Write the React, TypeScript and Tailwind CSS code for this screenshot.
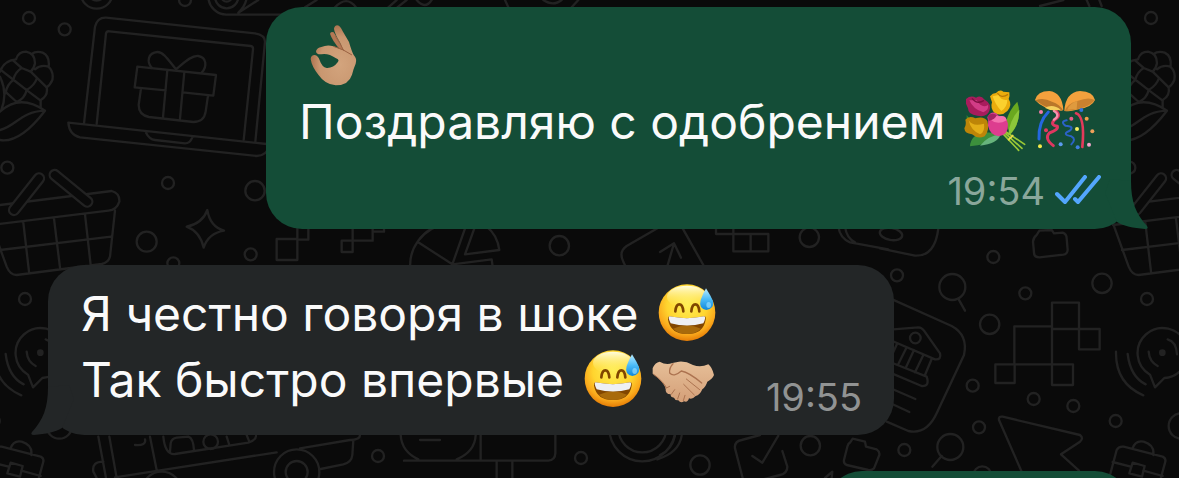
import type { ReactNode } from "react";

type EmojiProps = {
  label: string;
  children: ReactNode;
};

function Emoji({ label, children }: EmojiProps) {
  return (
    <svg role="img" aria-label={label} viewBox="0 0 204 198" className="h-[66px] w-[70px] shrink-0">
      {children}
    </svg>
  );
}

function OkHand() {
  return (
    <Emoji label="OK hand">
      <defs>
        <radialGradient id="okSkin" cx="0.65" cy="0.65" r="0.65">
          <stop offset="0" stopColor="#d3a47d" />
          <stop offset="0.7" stopColor="#c99770" />
          <stop offset="1" stopColor="#ad7450" />
        </radialGradient>
      </defs>
      <path d="M90 32Q92 24 101 28L132 78L122 82Q96 52 90 32Z" fill="#b37854" />
      <path
        d="M102 16Q106 3 117 8Q124 14 129 26L147 57Q155 85 161 96Q172 107 167 122Q160 138 156 155Q146 187 107 187Q75 184 55 155Q35 130 32 108Q33 96 44 96Q55 98 59 112Q66 133 80 135Q100 136 113 118Q120 110 108 106Q85 90 64 94Q48 95 48 84Q52 74 64 72Q82 64 100 70L130 82Q124 62 112 44Q102 26 102 16Z"
        fill="url(#okSkin)"
      />
      <path d="M100 70Q130 78 156 96M106 40Q122 62 131 83" fill="none" stroke="#9a6242" strokeWidth="3" />
    </Emoji>
  );
}

function Bouquet() {
  return (
    <Emoji label="bouquet">
      <path d="M172 38Q148 62 138 98L150 138Q190 92 172 38Z" fill="#6aa81f" />
      <path d="M178 62Q150 90 144 140Q176 118 178 62Z" fill="#8cc63a" />
      <path d="M30 172Q32 138 72 130L115 132L104 150Q80 168 30 172Z" fill="#3c8f3c" />
      <path d="M60 170Q85 140 122 136Q112 166 60 170Z" fill="#67b47c" />
      <path d="M20 78Q30 95 52 88L60 104L20 90Z" fill="#2f8a34" />
      <path
        d="M125 130L176 184M130 128L186 178M134 126L194 166"
        fill="none"
        stroke="#9bc936"
        strokeWidth="5"
        strokeLinecap="round"
      />
      <path d="M146 152L158 140" stroke="#e7d84a" strokeWidth="6" strokeLinecap="round" />
      <path d="M18 30Q32 18 48 26Q62 16 74 32Q96 44 88 66Q80 86 52 80Q24 78 24 58L18 44Z" fill="#a81c5c" />
      <path d="M28 34Q40 62 70 70Q88 62 84 48Q66 60 50 34Z" fill="#d23c86" />
      <path d="M36 28Q52 48 72 34" fill="none" stroke="#7d0f40" strokeWidth="4" />
      <path d="M90 22Q98 12 108 12Q120 0 130 8L148 10Q150 20 146 30Q158 48 142 66Q124 84 104 72Q90 58 96 40Z" fill="#e9ac0d" />
      <path d="M98 22Q106 48 124 66Q142 54 142 32Q124 36 116 18Z" fill="#fbd02e" />
      <path d="M112 12Q124 30 144 16" fill="none" stroke="#b87905" strokeWidth="4" />
      <path d="M16 92Q28 78 46 88Q72 80 82 96Q90 124 74 142Q54 152 36 136Q14 134 13 118Q20 106 16 92Z" fill="#bd8508" />
      <path d="M26 94Q38 114 72 104Q76 128 60 136Q32 124 26 94Z" fill="#e3ae18" />
      <path d="M90 74Q104 64 116 80Q140 80 144 104Q146 138 116 142Q90 138 84 110Q86 94 82 84Z" fill="#dd3d8f" />
      <path d="M92 92Q112 110 140 94Q138 78 118 82Q100 78 92 92Z" fill="#f472ae" />
      <path d="M84 80Q94 70 110 78Q106 92 86 96Z" fill="#a32463" />
    </Emoji>
  );
}

const confettiDots = [
  { x: 33, y: 69, fill: "#f07ba8" },
  { x: 48, y: 124, fill: "#e23a62" },
  { x: 30, y: 172, fill: "#f4ea4a" },
  { x: 92, y: 166, fill: "#5c9bf0" },
  { x: 124, y: 89, fill: "#ec5c87" },
  { x: 141, y: 120, fill: "#f6ee62" },
  { x: 170, y: 89, fill: "#f0a04a" },
  { x: 187, y: 127, fill: "#efa05a" },
  { x: 154, y: 63, fill: "#2f73e0" },
  { x: 143, y: 175, fill: "#3f80e4" },
  { x: 177, y: 167, fill: "#f3a6cd" },
];

function ConfettiBall() {
  return (
    <Emoji label="confetti ball">
      <g fill="none" strokeLinecap="round">
        <path d="M55 69Q25 98 27 150" stroke="#2467e0" strokeWidth="9" />
        <path d="M72 62Q98 78 74 92Q58 108 82 112Q86 122 58 132Q42 148 70 170" stroke="#df3760" strokeWidth="9" />
        <path d="M72 66Q92 78 72 92" stroke="#f592ae" strokeWidth="7" />
        <path d="M110 94Q90 98 106 110Q136 112 118 126Q94 136 124 142Q140 150 124 166" stroke="#2b62c8" strokeWidth="6" />
        <path d="M138 73Q166 82 157 174" stroke="#e33a5b" strokeWidth="8" />
      </g>
      <path d="M15 33Q22 6 58 6Q96 10 100 62Q94 68 84 62Q40 62 15 33Z" fill="#f3a13d" />
      <path d="M16 34Q40 24 66 38Q90 46 99 64Q58 66 16 34Z" fill="#b9772a" />
      <path d="M44 56Q70 44 92 62Q64 68 44 56Z" fill="#f4cf5c" />
      <path d="M103 66Q106 10 150 6Q190 8 195 33Q186 56 140 62Q112 68 103 66Z" fill="#f3a13d" />
      <path d="M104 66Q112 44 142 36Q176 22 194 33Q176 60 104 66Z" fill="#c9812f" />
      <path d="M112 62Q120 42 142 36L140 60Z" fill="#df9a3e" />
      {confettiDots.map((dot) => (
        <circle key={`${dot.x}-${dot.y}`} cx={dot.x} cy={dot.y} r="6" fill={dot.fill} />
      ))}
    </Emoji>
  );
}

function SweatSmile() {
  return (
    <Emoji label="grinning face with sweat">
      <defs>
        <radialGradient id="face" cx="0.5" cy="0.36" r="0.64">
          <stop offset="0" stopColor="#ffef55" />
          <stop offset="0.55" stopColor="#ffd52f" />
          <stop offset="0.82" stopColor="#faa91c" />
          <stop offset="1" stopColor="#e57c06" />
        </radialGradient>
        <linearGradient id="shine" x2="0" y2="1">
          <stop offset="0" stopColor="#fffde0" />
          <stop offset="1" stopColor="#ffe94d" stopOpacity="0" />
        </linearGradient>
        <linearGradient id="drop" x2="0" y2="1">
          <stop offset="0" stopColor="#b8eaff" />
          <stop offset="0.5" stopColor="#4dbcf7" />
          <stop offset="1" stopColor="#0f87dc" />
        </linearGradient>
      </defs>
      <circle cx="102" cy="95" r="85" fill="url(#face)" />
      <ellipse cx="102" cy="48" rx="60" ry="34" fill="url(#shine)" />
      <path
        d="M67 91Q69 70 79 70Q89 70 91 91M115 91Q117 70 127 70Q137 70 139 91"
        fill="none"
        stroke="#804600"
        strokeWidth="8"
        strokeLinecap="round"
      />
      <path d="M49 106Q102 117 154 106Q160 107 158 116Q151 159 102 159Q53 159 45 116Q44 107 49 106Z" fill="#824600" />
      <path d="M60 143Q102 122 144 143Q128 159 102 159Q76 159 60 143Z" fill="#a86a0b" />
      <path d="M49 106Q102 117 154 106Q160 109 151 127Q102 140 53 127Q44 109 49 106Z" fill="#eef0f4" />
      <path d="M159 22Q150 38 143 57Q136 83 160 87Q184 84 180 60Q172 42 159 22Z" fill="url(#drop)" />
      <ellipse cx="167" cy="72" rx="7" ry="9" fill="#94dcff" opacity="0.7" />
    </Emoji>
  );
}

function Handshake() {
  return (
    <Emoji label="handshake">
      <defs>
        <linearGradient id="shakeSkin" x2="0" y2="1">
          <stop offset="0" stopColor="#e6bf98" />
          <stop offset="1" stopColor="#d49f78" />
        </linearGradient>
      </defs>
      <path
        d="M11 64Q18 46 32 44Q52 56 70 48L90 44Q110 42 132 54Q155 62 178 52Q189 60 195 84Q190 97 175 104Q170 120 160 127Q153 144 140 147Q130 158 120 154Q116 168 105 163Q95 170 88 160Q78 161 75 152Q64 152 65 142Q48 142 50 124Q42 102 11 80Z"
        fill="url(#shakeSkin)"
      />
      <g fill="none" stroke="#ac7350" strokeWidth="4" strokeLinecap="round">
        <path d="M72 50Q60 62 62 78Q74 92 97 72Q120 76 158 108" />
        <path d="M112 96L152 128M104 112L136 144M50 124L62 118M67 142L77 128M86 156L92 138M103 161L108 145" strokeWidth="3" />
        <path d="M52 122Q44 104 14 82" strokeWidth="3" />
      </g>
    </Emoji>
  );
}

// Motifs on the left edge, drawn again where the wallpaper repeats
function EdgeMotifs() {
  return (
    <>
      <circle cx="87" cy="54" r="18" />
      <circle cx="22" cy="503" r="18" />
      {/* corn */}
      <path d="M0 215Q10 182 48 178Q55 155 78 155Q105 160 105 190Q102 206 92 215M95 162Q108 152 128 158Q150 168 146 200M105 208Q122 193 145 200Q162 215 157 240Q150 256 140 262Q145 288 122 300V322" />
      <path d="M5 212L45 243L82 272L122 302M40 182L65 204L92 215L140 262M65 204Q45 216 40 240Q22 252 16 280M111 234Q104 256 80 270Q74 296 50 306M16 275L50 306" />
      <path d="M0 335Q60 280 135 332Q60 430 0 420M0 390C50 378 60 335 135 332M0 230Q24 280 4 330" />
      {/* basket */}
      <path d="M0 615L335 573Q360 580 358 605Q350 630 325 632L-27 675M345 632L330 770Q325 788 305 792L50 825Q30 825 20 800L-27 670M70 668L87 815M162 656L180 803M255 643L272 795M0 750L333 710" />
      <path d="M117 535L42 630M164 525L262 605" strokeWidth="37" />
      <path d="M117 535L42 630M164 525L262 605" stroke="#0a0a0a" strokeWidth="23" />
      {/* podcast bubble */}
      <g transform="translate(0 600)">
        <circle cx="75" cy="297" r="18" />
        <path d="M84 524L99 562L127 534A75 75 0 1 0 84 524ZM80 455Q82 485 107 498M137 418Q163 425 165 463M17 462Q25 530 71 553M-18 455Q-20 550 64 586" />
        <circle cx="121" cy="458" r="10" fill="#222222" stroke="none" />
        <circle cx="-19" cy="663" r="18" />
        <circle cx="178" cy="678" r="38" />
        <path d="M-40 840L-16 750Q-10 738 5 740L122 770Q132 775 130 785L116 836M-28 786L26 800M64 812L122 828M32 745Q40 720 65 725Q98 735 94 765M32 788L68 798L60 830L22 820Z" />
      </g>
    </>
  );
}

function Wallpaper() {
  return (
    <svg
      aria-hidden="true"
      viewBox="0 0 3537 1434"
      preserveAspectRatio="xMinYMin slice"
      className="absolute inset-0 h-full w-full"
      fill="none"
      stroke="#222222"
      strokeWidth="7"
      strokeLinecap="round"
      strokeLinejoin="round"
    >
      <EdgeMotifs />
      <g transform="translate(3366 0)">
        <EdgeMotifs />
      </g>

      {/* laptop with a gift */}
      <circle cx="194" cy="88" r="18" />
      <circle cx="504" cy="549" r="18" />
      <circle cx="765" cy="572" r="29" />
      <circle cx="555" cy="0" r="18" />
      <circle cx="290" cy="-22" r="48" />
      <circle cx="290" cy="-22" r="24" />
      <path d="M625 -10A55 55 0 0 0 680 44H850M645 -10A35 35 0 0 0 715 -10M715 38L775 0M665 -10A15 15 0 0 0 695 -10M740 -5Q735 20 715 38" />
      <path d="M252 370L285 80Q292 52 318 53L765 100Q795 105 795 125L766 425M290 372L318 100Q320 93 328 94L752 138Q760 140 759 148L731 420" />
      <path d="M205 368L800 432M205 368Q208 405 240 412L770 468Q800 468 810 435M438 398Q448 418 465 420L555 430Q570 430 577 412" />
      <path d="M404 262L412 200L648 225L640 287L548 277M404 262L497 271M502 210L489 352M553 216L540 356M423 265L416 315Q416 345 447 351L580 366Q612 366 617 335L624 287" />
      <path d="M528 208C505 180 490 155 472 156C445 158 438 185 456 204M528 208C550 190 575 165 595 168C620 172 622 200 605 218" />

      {/* sparkle and bus */}
      <g transform="translate(0 600)">
        <circle cx="440" cy="125" r="30" />
        <circle cx="520" cy="190" r="18" />
        <circle cx="752" cy="163" r="18" />
        <path d="M622 30Q630 80 672 92Q625 100 611 143Q600 95 560 80Q608 70 622 30Z" />
        <path d="M295 710L318 834M328 710L350 834M450 710L470 810M345 832L830 757M490 710Q495 765 525 762L745 728Q768 720 768 708M510 755L512 730Q515 715 530 713L565 710Q580 715 582 750M680 710L688 735M740 705L748 725M405 735Q440 738 435 718M310 785Q275 785 280 815L290 834" />
        <circle cx="632" cy="725" r="22" />
        <circle cx="890" cy="816" r="68" />
        <circle cx="890" cy="816" r="33" />
        <circle cx="485" cy="875" r="60" />
      </g>

      {/* pixels and pie chart */}
      <g transform="translate(870 660)">
        <path d="M-40 57H22V120H-40ZM22 10H55V59H22ZM155 62H188V96H155ZM188 0V62H248V20M248 35H282V20" />
        <path d="M363 160A125 125 0 0 1 470 12M387 68L487 133L527 20M553 25L525 103L628 90Q622 45 590 20M487 133L605 118L608 140" />
        <circle cx="808" cy="77" r="29" />
      </g>

      {/* arrow card */}
      <g transform="translate(1740 630)">
        <path d="M240 50L140 108Q115 125 130 155L137 170M305 50L370 165M263 165L282 100M240 126L282 100L303 143" />
        <path d="M408 40H460V72H408ZM460 72H512V124H460ZM512 72H565V124H512Z" />
        <circle cx="688" cy="82" r="29" />
        <path d="M775 50Q780 85 810 97L925 118M795 50Q800 85 825 97" />
      </g>

      {/* top strip */}
      <path d="M915 22L950 0M1005 22Q1040 -15 1068 22M1165 22L1190 0M1192 22L1220 0M1250 0Q1275 30 1295 0M1515 0L1525 22M1630 0Q1660 20 1685 0M1715 22L1735 0M3120 18L3190 0M3260 0L3268 18M3298 0L3305 18" />

      {/* right side */}
      <g transform="translate(2640 660)">
        <ellipse cx="33" cy="42" rx="34" ry="18" transform="rotate(10 33 42)" />
        <path d="M175 25Q165 110 105 107L0 85" />
        <path d="M470 45L478 32L515 30L522 40L548 38Q560 42 560 55L563 90Q562 102 550 104L478 112Q462 112 462 98L459 65Q460 52 470 45Z" />
        <circle cx="340" cy="111" r="18" />
        <circle cx="51" cy="166" r="18" />
        <circle cx="436" cy="220" r="18" />
        <circle cx="666" cy="190" r="29" />
        <circle cx="329" cy="313" r="29" />
        <circle cx="278" cy="497" r="18" />
        <circle cx="461" cy="537" r="18" />
        <circle cx="580" cy="558" r="18" />
        <circle cx="297" cy="622" r="18" />
        <circle cx="73" cy="690" r="18" />
        <circle cx="307" cy="766" r="27" />
        <circle cx="217" cy="201" r="39" />
        <circle cx="211" cy="681" r="39" />
        <path d="M236 238L255 272M185 708L157 740" />
        <path d="M403 319H516V433H403ZM516 248H597V327H516ZM597 327H659V388H597ZM346 433H404V489H346ZM516 433H579V495H516Z" />
        <path d="M30 235L215 318Q265 345 252 405L170 580Q140 645 85 633L20 605" />
        <path d="M30 329L115 322Q125 322 132 332L180 400Q185 420 165 418L30 360M52 370L30 418M80 382L55 432M102 390L78 442M130 405L105 457M155 417L135 465M30 426L140 470Q150 500 125 498L30 458M30 504L106 537M30 549L88 576" />
        <circle cx="106" cy="354" r="16" />
        <path d="M427 760L357 600Q355 588 368 590L600 645Q612 655 600 665L543 703L597 752" />
      </g>

      {/* bottom strip */}
      <g transform="translate(1680 780)">
        <circle cx="63" cy="594" r="18" />
        <circle cx="420" cy="615" r="29" />
        <circle cx="751" cy="557" r="29" />
        <circle cx="247" cy="505" r="99" />
        <circle cx="247" cy="505" r="72" />
        <path d="M365 527Q357 578 292 598M345 527Q335 570 300 585" />
        <path d="M548 654L525 565Q522 545 545 540L600 525M655 527L607 608L577 588M667 573L682 620Q682 640 660 645L610 658" />
        <path d="M870 548L878 536L915 545L918 560L950 568Q960 575 958 585L942 625Q935 632 925 630L860 615Q850 610 852 600L862 560Q865 550 870 548ZM795 654L817 635L815 654" />
      </g>
      <g transform="translate(900 1275)">
        <circle cx="234" cy="93" r="18" />
        <path d="M302 30Q305 80 355 103M527 30Q525 80 470 103M312 107H745Q765 105 766 85V30M542 30V105M590 108V159M637 108V159M360 45H420M62 132L130 118Q155 112 157 90L160 45M0 70L150 45Q180 45 180 30" />
      </g>
    </svg>
  );
}

function ReadTicks() {
  return (
    <svg
      role="img"
      aria-label="Read"
      viewBox="1 0 46 32"
      className="-mr-0.5 h-8 w-[46px]"
      fill="none"
      stroke="#53a6fd"
      strokeWidth="4"
      strokeLinecap="round"
      strokeLinejoin="round"
    >
      <path d="M3 19L11 27L31 2M21 24L24 27L45 2" />
    </svg>
  );
}

type BubbleProps = {
  side: "in" | "out";
  children?: ReactNode;
};

function Bubble({ side, children }: BubbleProps) {
  const outgoing = side === "out";

  return (
    <article
      className={
        outgoing
          ? "relative min-h-24 min-w-[305px] self-end rounded-[36px] bg-[#144d37] pt-4 pr-8 pb-[22px] pl-[33px]"
          : "relative self-start rounded-[36px] bg-[#232627] pt-4 pr-8 pb-[22px] pl-[33px]"
      }
    >
      {children}
      <svg
        aria-hidden="true"
        viewBox="0 0 48 56"
        className={
          outgoing
            ? "absolute right-[-17px] bottom-0 h-14 w-12 text-[#144d37]"
            : "absolute bottom-0 left-[-17px] h-14 w-12 -scale-x-100 text-[#232627]"
        }
      >
        <path d="M31 8C31 29 36 41 47 53Q49 56 45 56C33 55 24 53 17 49L5 20L10 6Z" fill="currentColor" />
      </svg>
    </article>
  );
}

export default function App() {
  return (
    <main className="relative h-screen overflow-hidden bg-[#0a0a0a] font-['Inter',sans-serif] text-[48px] leading-[66px] text-[#fafafa]">
      <Wallpaper />
      <div className="relative flex flex-col gap-9 px-12 pt-[7px]">
        <Bubble side="out">
          <p className="flex">
            <OkHand />
          </p>
          <p className="flex whitespace-pre">
            {"Поздравляю с одобрением "}
            <Bouquet />
            <ConfettiBall />
          </p>
          <div className="mt-5 flex items-center justify-end gap-2.5 text-[38px] leading-8 text-[#8aa79b]">
            <time dateTime="19:54">19:54</time>
            <ReadTicks />
          </div>
        </Bubble>

        <Bubble side="in">
          <div className="flex items-end gap-11">
            <div>
              <p className="flex whitespace-pre">
                {"Я честно говоря в шоке "}
                <SweatSmile />
              </p>
              <p className="flex whitespace-pre">
                {"Так быстро впервые "}
                <SweatSmile />
                <Handshake />
              </p>
            </div>
            <time dateTime="19:55" className="text-[38px] leading-8 text-[#919393]">
              19:55
            </time>
          </div>
        </Bubble>

        <Bubble side="out" />
      </div>
    </main>
  );
}
